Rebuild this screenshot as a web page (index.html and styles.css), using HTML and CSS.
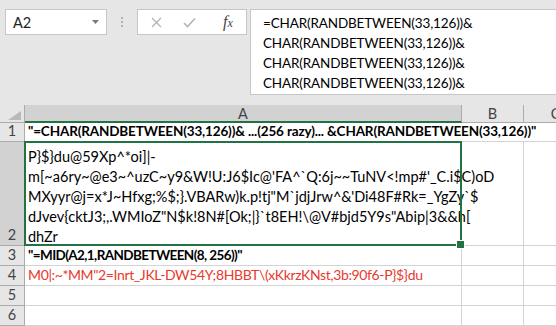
FILE: index.html
```html
<!DOCTYPE html>
<html lang="pl">
<head>
    <meta charset="UTF-8">
    <title>Arkusz</title>
    <link rel="stylesheet" href="styles.css">
</head>
<body>

<div class="toolbar">
	<div class="name-box">
		<span>A2</span>
		<svg class="caret" width="7" height="4" viewBox="0 0 7 4"><path d="M0 0H7L3.5 4Z" fill="#7a7a7a"/></svg>
	</div>

	<div class="grip"><i></i><i></i><i></i></div>

	<div class="fx-box">
		<svg class="tool-icon" width="11" height="11" viewBox="0 0 11 11">
			<path d="M1 1L10 10M10 1L1 10" stroke="#b3b3b3" stroke-width="1.3" fill="none"/>
		</svg>
		<svg class="tool-icon" width="13" height="11" viewBox="0 0 13 11">
			<path d="M1 6L4.5 9.5L12 1.5" stroke="#b3b3b3" stroke-width="1.6" fill="none"/>
		</svg>
		<span class="fx">f<small>x</small></span>
	</div>

	<div class="formula">
		<p>=CHAR(RANDBETWEEN(33,126))&amp;</p>
		<p>CHAR(RANDBETWEEN(33,126))&amp;</p>
		<p>CHAR(RANDBETWEEN(33,126))&amp;</p>
		<p>CHAR(RANDBETWEEN(33,126))&amp;</p>
	</div>
</div>

<div class="sheet">
	<div class="corner">
		<svg width="13" height="9" viewBox="0 0 13 9"><path d="M13 0V9H0Z" fill="#b9b9b9"/></svg>
	</div>
	<div class="col-head selected">A</div>
	<div class="col-head">B</div>
	<div class="col-head">C</div>

	<div class="row-head">1</div>
	<div class="cell bold span-all">"=CHAR(RANDBETWEEN(33,126))&amp; ...(256 razy)... &amp;CHAR(RANDBETWEEN(33,126))"</div>

	<div class="row-head selected">2</div>
	<div class="cell wrap active">P}$}du@59Xp^*oi]|-<br>m[~a6ry~@e3~^uzC~y9&amp;W!U:J6$Ic@'FA^`Q:6j~~TuNV&lt;!mp#'_C.i$C)oD<br>MXyyr@j=x*J~Hfxg;%$;}.VBARw)k.p!tj"M`jdjJrw^&amp;'Di48F#Rk=_YgZy`$<br>dJvev{cktJ3;,.WMIoZ"N$k!8N#[Ok;|}`t8EH!\@V#bjd5Y9s"Abip|3&amp;&amp;h[<br>dhZr</div>
	<div class="cell"></div>
	<div class="cell"></div>

	<div class="row-head">3</div>
	<div class="cell bold narrow">"=MID(A2,1,RANDBETWEEN(8, 256))"</div>
	<div class="cell"></div>
	<div class="cell"></div>

	<div class="row-head">4</div>
	<div class="cell red">M0|:~*MM"2=Inrt_JKL-DW54Y;8HBBT\(xKkrzKNst,3b:90f6-P}$}du</div>
	<div class="cell"></div>
	<div class="cell"></div>

	<div class="row-head">5</div>
	<div class="cell"></div>
	<div class="cell"></div>
	<div class="cell"></div>

	<div class="row-head">6</div>
	<div class="cell"></div>
	<div class="cell"></div>
	<div class="cell"></div>
</div>

</body>
</html>
```

FILE: styles.css
```css
*{
	padding: 0;
	margin: 0;
	box-sizing: border-box;
}

body{
	width: 556px;
	height: 326px;
	overflow: hidden;
	background-color: #e6e6e6;
	font-family: "Lato", "Liberation Sans", sans-serif;
	font-size: 14.5px;
	color: #000;
}

/* formula bar */

.toolbar{
	height: 105px;
	display: flex;
	align-items: flex-start;
	padding-top: 9px;
}

.name-box{
	margin-left: 5px;
	width: 102px;
	height: 26px;
	background-color: #fff;
	border: 1px solid #c6c6c6;
	display: flex;
	align-items: center;
	justify-content: space-between;
	padding: 0 7px 0 7px;
	color: #222;
}

.grip{
	width: 30px;
	height: 26px;
	display: flex;
	flex-direction: column;
	align-items: center;
	justify-content: center;
	gap: 2px;
}

.grip i{
	width: 2px;
	height: 2px;
	background-color: #b0b0b0;
}

.fx-box{
	width: 110px;
	height: 26px;
	background-color: #fff;
	border: 1px solid #c6c6c6;
	display: flex;
	align-items: center;
	padding-left: 13px;
	gap: 21px;
}

.fx{
	font-family: "Liberation Serif", serif;
	font-style: italic;
	font-size: 16px;
	color: #444;
	margin-left: 6px;
}

.fx small{
	font-size: 12px;
}

.formula{
	margin-left: 3px;
	flex: 1;
	height: 86px;
	background-color: #fff;
	border: 1px solid #c6c6c6;
	border-right: none;
	padding: 3px 0 0 12px;
	font-size: 13.5px;
	letter-spacing: -0.15px;
}

.formula p{
	line-height: 20px;
	white-space: nowrap;
}

/* sheet */

.sheet{
	display: grid;
	grid-template-columns: 25px 437px 62px 64px;
	grid-template-rows: 18px 19px 104px 20px 20px 20px 20px;
	width: 588px;
	background-color: #fff;
}

.corner{
	background-color: #e6e6e6;
	border-right: 1px solid #ababab;
	border-bottom: 1px solid #ababab;
	display: flex;
	align-items: flex-end;
	justify-content: flex-end;
	padding: 0 3px 2px 0;
}

.col-head{
	background-color: #e6e6e6;
	border-right: 1px solid #ababab;
	border-bottom: 1px solid #ababab;
	display: flex;
	align-items: center;
	justify-content: center;
	color: #444;
}

.row-head{
	background-color: #e6e6e6;
	border-right: 1px solid #ababab;
	border-bottom: 1px solid #ababab;
	display: flex;
	align-items: flex-end;
	justify-content: center;
	color: #444;
	line-height: 20px;
}

.col-head.selected{
	background-color: #d2d2d2;
	border-bottom: 2px solid #217346;
}

.row-head.selected{
	background-color: #d2d2d2;
}

.cell{
	border-right: 1px solid #d4d4d4;
	border-bottom: 1px solid #d4d4d4;
	padding: 0 2px 0 3px;
	white-space: nowrap;
	line-height: 20px;
	display: flex;
	align-items: flex-end;
}

.span-all{
	grid-column: 2 / 5;
}

.bold{
	font-weight: bold;
	font-size: 13.5px;
	letter-spacing: -0.15px;
}

.bold.narrow{
	letter-spacing: -0.6px;
}

.red{
	color: #e8392d;
	font-size: 14px;
	letter-spacing: -0.37px;
}

.wrap{
	display: block;
	padding-top: 5px;
}

.active{
	position: relative;
}

.active::after{
	content: "";
	position: absolute;
	top: -1px;
	left: -1px;
	right: -1px;
	bottom: -1px;
	border: 2px solid #217346;
}

.active::before{
	content: "";
	position: absolute;
	right: -4px;
	bottom: -4px;
	width: 7px;
	height: 7px;
	background-color: #217346;
	border: 1px solid #fff;
	z-index: 1;
}
```
